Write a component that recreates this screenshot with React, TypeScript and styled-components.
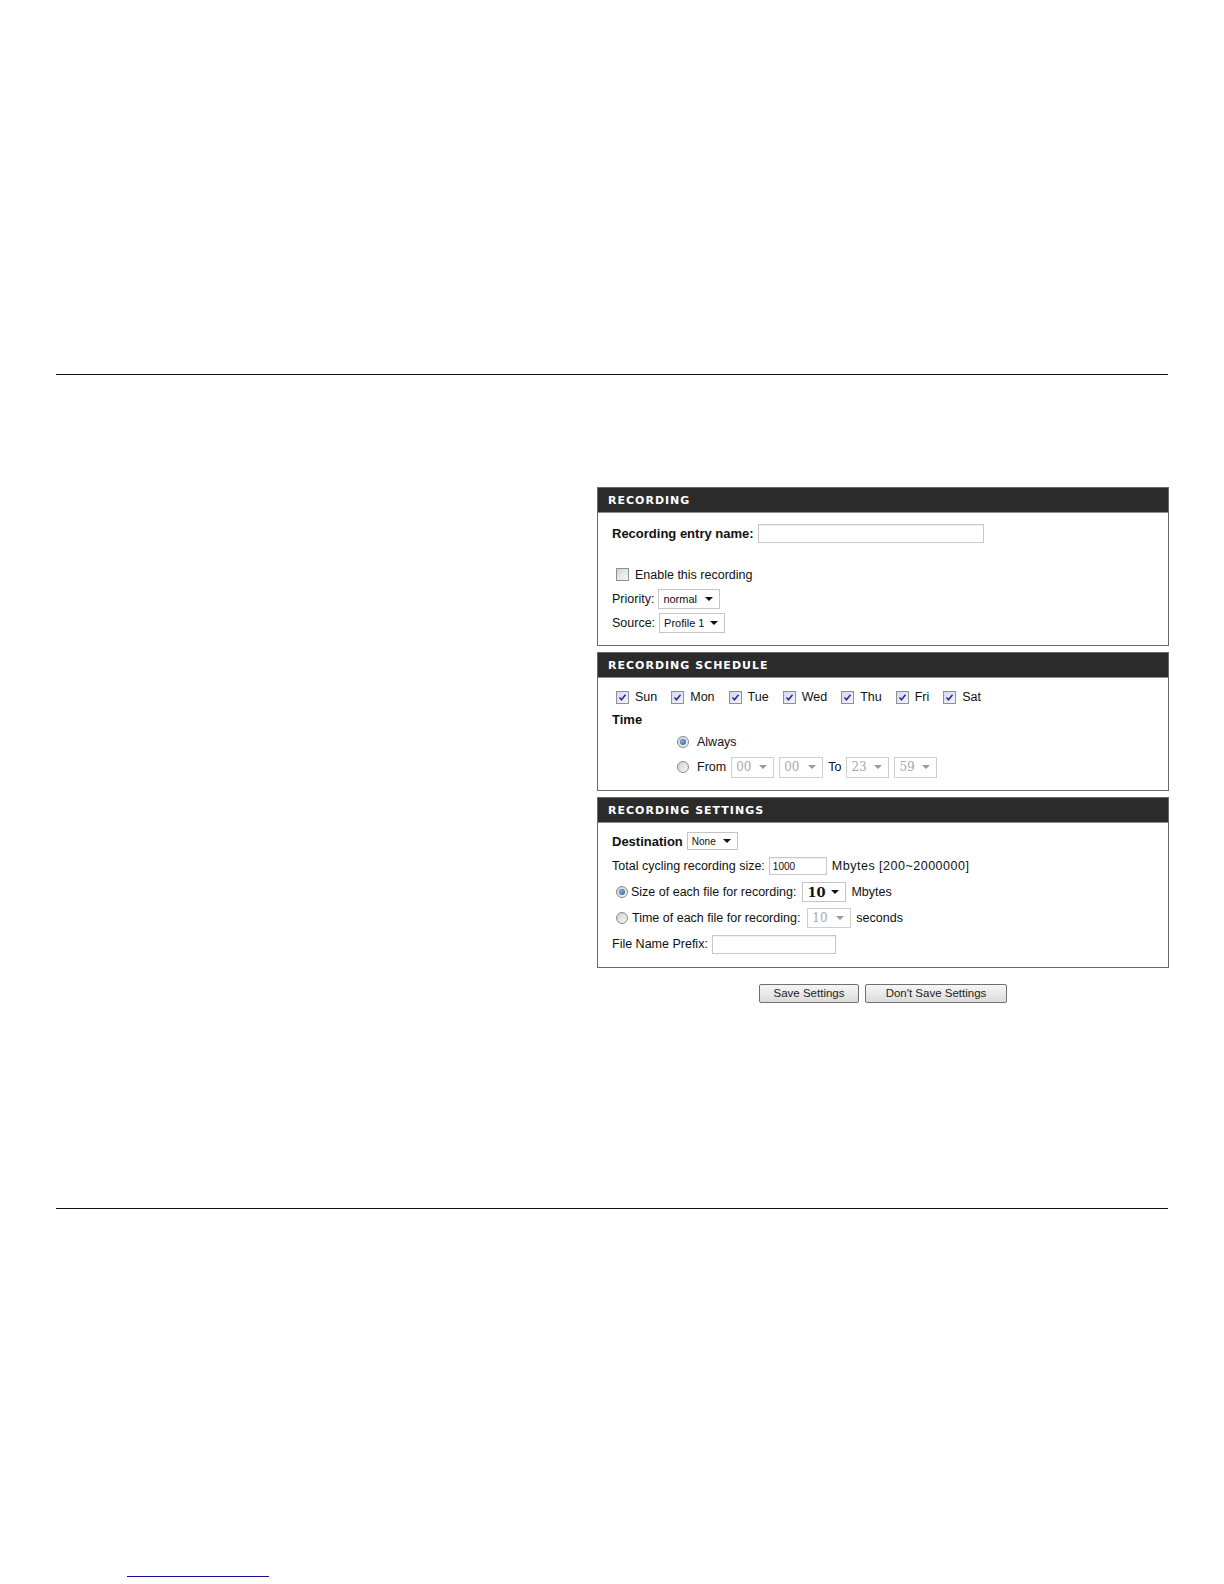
import React from 'react';
import styled, { createGlobalStyle } from 'styled-components';

const Global = createGlobalStyle`
  html, body { margin: 0; padding: 0; background: #fff; }
  body { font-family: "Liberation Sans", Arial, sans-serif; color: #111; }
`;

const Page = styled.div`
  width: 1224px;
  height: 1584px;
  box-sizing: border-box;
  padding: 374px 0 0 56px;
  display: flex;
  flex-direction: column;
`;

const Rule = styled.div`
  width: 1112px;
  height: 1px;
  background: #111;
`;

const Content = styled.div`
  display: grid;
  grid-template-columns: 541px 572px;
  height: 833px;
  box-sizing: border-box;
  padding-top: 112px;
`;

const Column = styled.div`
  display: flex;
  flex-direction: column;
  gap: 6px;
`;

const Panel = styled.section`
  border: 1px solid #6a6a6a;
  background: #fff;
`;

const PanelHeader = styled.div`
  height: 24px;
  background: #2b2b2b;
  border-bottom: 1px solid #8c8c8c;
  color: #fff;
  font-family: "DejaVu Sans", Verdana, sans-serif;
  font-weight: bold;
  font-size: 11px;
  letter-spacing: 1px;
  padding-left: 10px;
  display: flex;
  align-items: center;
`;

const PanelBody = styled.div<{ $pt: number; $pb: number }>`
  padding: ${p => p.$pt}px 14px ${p => p.$pb}px 14px;
  display: flex;
  flex-direction: column;
`;

const Row = styled.div<{ $h: number; $mt?: number; $indent?: number }>`
  height: ${p => p.$h}px;
  margin-top: ${p => p.$mt ?? 0}px;
  padding-left: ${p => p.$indent ?? 0}px;
  display: flex;
  align-items: center;
  font-size: 12.5px;
  white-space: nowrap;
`;

const Label = styled.span<{ $bold?: boolean; $size?: number; $gap?: number }>`
  font-weight: ${p => (p.$bold ? 'bold' : 'normal')};
  font-size: ${p => p.$size ?? 12.5}px;
  margin-right: ${p => p.$gap ?? 4}px;
`;

const Text = styled.span<{ $ml?: number; $wide?: boolean }>`
  margin-left: ${p => p.$ml ?? 0}px;
  font-size: 12.5px;
  letter-spacing: ${p => (p.$wide ? '0.5px' : 'normal')};
`;

const TextInput = styled.input<{ $w: number; $h: number }>`
  width: ${p => p.$w}px;
  height: ${p => p.$h}px;
  box-sizing: border-box;
  border: 1px solid #c8c8c8;
  box-shadow: inset 0 1px 1px rgba(0, 0, 0, 0.06);
  padding: 0 3px;
  font-family: "Liberation Sans", Arial, sans-serif;
  font-size: 10px;
  color: #111;
  outline: none;
  margin: 0;
`;

const SelectBox = styled.div<{ $w: number; $h: number; $disabled?: boolean }>`
  width: ${p => p.$w}px;
  height: ${p => p.$h}px;
  box-sizing: border-box;
  border: 1px solid ${p => (p.$disabled ? '#cfcfcf' : '#c4c4c4')};
  background: #fff;
  display: flex;
  align-items: center;
  justify-content: space-between;
  padding: 0 6px 0 4px;
  color: ${p => (p.$disabled ? '#a9a9a9' : '#111')};
  flex-shrink: 0;
`;

const SelectValue = styled.span<{ $size: number; $bold?: boolean; $serif?: boolean }>`
  font-size: ${p => p.$size}px;
  font-weight: ${p => (p.$bold ? 'bold' : 'normal')};
  font-family: ${p => (p.$serif ? '"DejaVu Serif", Georgia, serif' : '"Liberation Sans", Arial, sans-serif')};
`;

const Arrow = styled.span<{ $disabled?: boolean }>`
  width: 0;
  height: 0;
  border-left: 4px solid transparent;
  border-right: 4px solid transparent;
  border-top: 4px solid ${p => (p.$disabled ? '#9a9a9a' : '#111')};
  margin-left: 4px;
`;

const Check = styled.span<{ $checked?: boolean }>`
  width: 11px;
  height: 11px;
  border: 1px solid #8e8f8f;
  background: ${p => (p.$checked ? 'linear-gradient(135deg, #d6d6f0, #f4f4fc)' : 'linear-gradient(135deg, #d4d4d4, #f6f6f6)')};
  display: inline-flex;
  align-items: center;
  justify-content: center;
  margin: 0 6px 0 4px;
  flex-shrink: 0;
`;

const Radio = styled.span<{ $checked?: boolean; $gap: number }>`
  width: 10px;
  height: 10px;
  border-radius: 50%;
  border: 1px solid #8a8a8a;
  background: linear-gradient(135deg, #d0d0d0, #f8f8f8);
  display: inline-flex;
  align-items: center;
  justify-content: center;
  flex-shrink: 0;
  margin-right: ${p => p.$gap}px;
  &::after {
    content: '';
    display: ${p => (p.$checked ? 'block' : 'none')};
    width: 6px;
    height: 6px;
    border-radius: 50%;
    background: radial-gradient(circle at 40% 40%, #7fb4e8, #1f4f8e);
  }
`;

const DayItem = styled.span`
  display: inline-flex;
  align-items: center;
  margin-right: 10px;
  font-size: 12.5px;
`;

const Controls = styled.span`
  display: inline-flex;
  align-items: center;
  gap: 5px;
`;

const ButtonRow = styled.div`
  display: flex;
  justify-content: center;
  gap: 6px;
  margin-top: 10px;
`;

const Button = styled.button<{ $w: number }>`
  width: ${p => p.$w}px;
  height: 19px;
  box-sizing: border-box;
  border: 1px solid #707070;
  border-radius: 2px;
  background: linear-gradient(#f6f6f6, #dcdcdc);
  font-family: "Liberation Sans", Arial, sans-serif;
  font-size: 11.5px;
  color: #222;
  padding: 0;
  line-height: 17px;
`;

const LinkLine = styled.div`
  margin: 367px 0 0 71px;
  width: 142px;
  height: 1px;
  background: #15158f;
`;

const CheckMark = () => (
  <svg width="9" height="9" viewBox="0 0 9 9">
    <path d="M1.5 4.5 L3.5 6.8 L7.5 1.8" fill="none" stroke="#2c2c9c" strokeWidth="1.6" />
  </svg>
);

const Select: React.FC<{ w: number; h: number; value: string; size?: number; bold?: boolean; disabled?: boolean; serif?: boolean }> = ({ w, h, value, size = 11, bold, disabled, serif }) => (
  <SelectBox $w={w} $h={h} $disabled={disabled}>
    <SelectValue $size={size} $bold={bold} $serif={serif}>{value}</SelectValue>
    <Arrow $disabled={disabled} />
  </SelectBox>
);

const days = ['Sun', 'Mon', 'Tue', 'Wed', 'Thu', 'Fri', 'Sat'];

export default function App() {
  return (
    <>
      <Global />
      <Page>
        <Rule />
        <Content>
          <div />
          <Column>
            <Panel>
              <PanelHeader>RECORDING</PanelHeader>
              <PanelBody $pt={8} $pb={10}>
                <Row $h={24}>
                  <Label $bold $size={13}>Recording entry name:</Label>
                  <TextInput $w={226} $h={19} defaultValue="" />
                </Row>
                <Row $h={25} $mt={17}>
                  <Check />
                  <Text>Enable this recording</Text>
                </Row>
                <Row $h={24}>
                  <Label>Priority:</Label>
                  <Select w={62} h={20} value="normal" />
                </Row>
                <Row $h={24}>
                  <Label>Source:</Label>
                  <Select w={66} h={20} value="Profile 1" />
                </Row>
              </PanelBody>
            </Panel>

            <Panel>
              <PanelHeader>RECORDING SCHEDULE</PanelHeader>
              <PanelBody $pt={7} $pb={10}>
                <Row $h={24}>
                  {days.map(d => (
                    <DayItem key={d}>
                      <Check $checked>
                        <CheckMark />
                      </Check>
                      {d}
                    </DayItem>
                  ))}
                </Row>
                <Row $h={20}>
                  <Label $bold $size={13}>Time</Label>
                </Row>
                <Row $h={25} $indent={65}>
                  <Radio $checked $gap={8} />
                  <Text>Always</Text>
                </Row>
                <Row $h={26} $indent={65}>
                  <Radio $gap={8} />
                  <Controls>
                    <Text>From</Text>
                    <Select w={43} h={21} value="00" size={12} disabled serif />
                    <Select w={44} h={21} value="00" size={12} disabled serif />
                    <Text>To</Text>
                    <Select w={43} h={21} value="23" size={12} disabled serif />
                    <Select w={43} h={21} value="59" size={12} disabled serif />
                  </Controls>
                </Row>
              </PanelBody>
            </Panel>

            <Panel>
              <PanelHeader>RECORDING SETTINGS</PanelHeader>
              <PanelBody $pt={6} $pb={10}>
                <Row $h={24}>
                  <Label $bold $size={13}>Destination</Label>
                  <Select w={51} h={18} value="None" size={10} />
                </Row>
                <Row $h={26}>
                  <Label>Total cycling recording size:</Label>
                  <TextInput $w={58} $h={18} defaultValue="1000" />
                  <Text $ml={5} $wide>Mbytes [200~2000000]</Text>
                </Row>
                <Row $h={26} $indent={4}>
                  <Radio $checked $gap={3} />
                  <Label $gap={6}>Size of each file for recording:</Label>
                  <Select w={44} h={20} value="10" size={13} bold serif />
                  <Text $ml={5}>Mbytes</Text>
                </Row>
                <Row $h={26} $indent={4}>
                  <Radio $gap={4} />
                  <Label $gap={7}>Time of each file for recording:</Label>
                  <Select w={44} h={20} value="10" size={12} disabled serif />
                  <Text $ml={5}>seconds</Text>
                </Row>
                <Row $h={26}>
                  <Label>File Name Prefix:</Label>
                  <TextInput $w={124} $h={19} defaultValue="" />
                </Row>
              </PanelBody>
            </Panel>

            <ButtonRow>
              <Button $w={100}>Save Settings</Button>
              <Button $w={142}>Don't Save Settings</Button>
            </ButtonRow>
          </Column>
        </Content>
        <Rule />
        <LinkLine />
      </Page>
    </>
  );
}
